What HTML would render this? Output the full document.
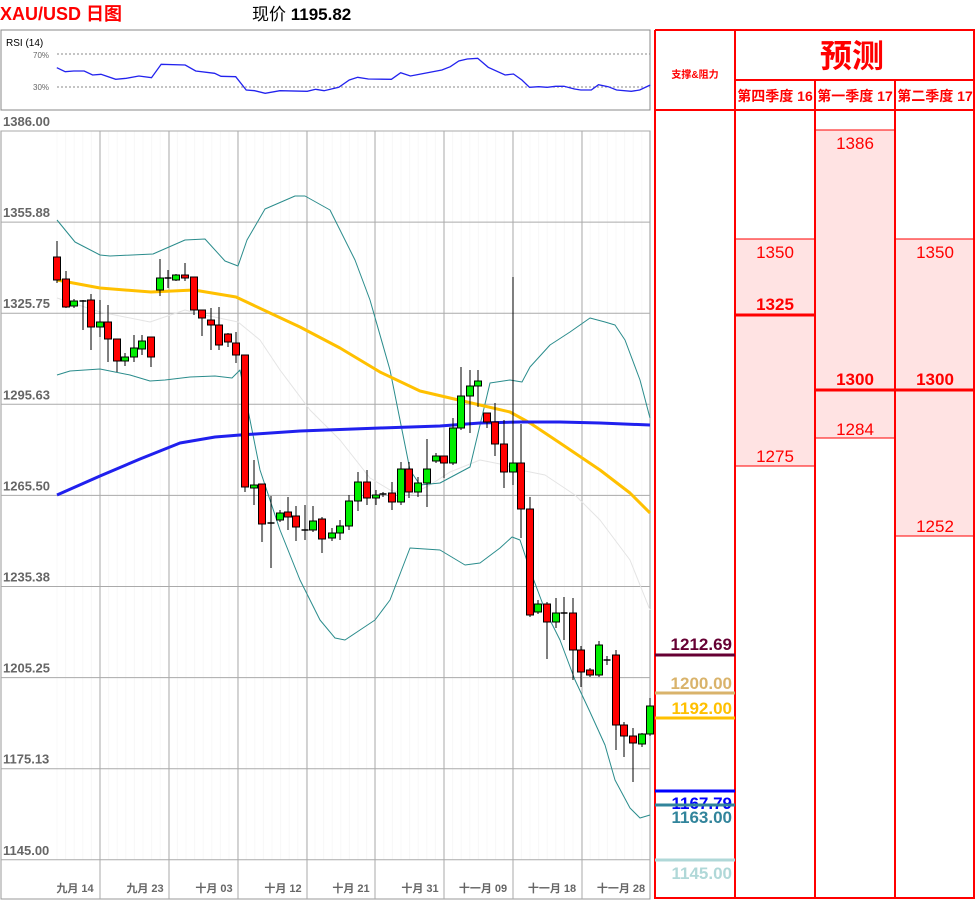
<!DOCTYPE html>
<html><head><meta charset="utf-8"><style>
html,body{margin:0;padding:0;background:#fff;width:975px;height:900px;overflow:hidden}
svg text{font-family:"Liberation Sans","Noto Sans CJK SC",sans-serif}
</style></head><body>
<svg id="s" width="975" height="900" xmlns="http://www.w3.org/2000/svg">
<text x="0" y="20" font-size="18" font-weight="bold" fill="#ff0000">XAU/USD 日图</text>
<text x="252" y="20" font-size="17" fill="#000">现价 <tspan font-weight="bold">1195.82</tspan></text>
<rect x="1" y="30" width="649" height="80" fill="#fff" stroke="#888" stroke-width="1"/>
<text x="6" y="46" font-size="10" fill="#000">RSI (14)</text>
<line x1="57" y1="54" x2="650" y2="54" stroke="#888" stroke-dasharray="2,2"/>
<line x1="57" y1="87" x2="650" y2="87" stroke="#888" stroke-dasharray="2,2"/>
<text x="33" y="58" font-size="8" fill="#666">70%</text>
<text x="33" y="90" font-size="8" fill="#666">30%</text>
<g id="chart"></g>
<g id="tbl"></g>
</svg>
<script>
var S=document.getElementById('s'),NS='http://www.w3.org/2000/svg';
function el(t,a,p){var e=document.createElementNS(NS,t);for(var k in a)e.setAttribute(k,a[k]);(p||S).appendChild(e);return e}
function tx(x,y,s,a,p){var e=el('text',a,p);e.setAttribute('x',x);e.setAttribute('y',y);e.textContent=s;return e}
var r=[[135,203],[155,215],[175,213],[200,213],[220,225],[240,223],[275,238],[300,235],[330,228],[360,233],[383,193],[440,195],[465,213],[510,220],[525,229],[560,230],[585,270],[605,272],[630,280],[665,272],[730,274],[750,268],[770,272],[805,262],[830,240],[850,232],[875,237],[930,238],[952,218],[975,228],[1000,222],[1050,210],[1070,200],[1090,183],[1110,177],[1135,175],[1160,202],[1200,225],[1220,222],[1240,240],[1258,262],[1280,260],[1300,262],[1320,259],[1340,259],[1365,267],[1380,270],[1405,270],[1422,254],[1445,260],[1465,270],[1500,274],[1520,270],[1545,255]];
el('polyline',{points:r.map(function(p){return (p[0]/2.376).toFixed(1)+','+(p[1]/3).toFixed(1)}).join(' '),fill:'none',stroke:'#2222ee','stroke-width':1.3});
el('rect',{x:1,y:131,width:649,height:768,fill:'#fff',stroke:'#999','stroke-width':1});
for(var x=57;x<650;x+=8.6)el('line',{x1:x,y1:131,x2:x,y2:860,stroke:'#f8f8f8'});
var vx=[100,169,238,307,375,444,513,582];
vx.forEach(function(x){el('line',{x1:x,y1:131,x2:x,y2:899,stroke:'#aaa'})});
var labs=['1386.00','1355.88','1325.75','1295.63','1265.50','1235.38','1205.25','1175.13','1145.00'];
for(var i=0;i<9;i++){var y=131+i*91.1;el('line',{x1:1,y1:y,x2:650,y2:y,stroke:'#aaa'});tx(3,y-5,labs[i],{'font-size':13,fill:'#666','font-weight':'bold'});}
var xl=['九月 14','九月 23','十月 03','十月 12','十月 21','十月 31','十一月 09','十一月 18','十一月 28'];
var xc=[75,145,214,283,351,420,483,552,621];
xl.forEach(function(s,i){tx(xc[i],892,s,{'font-size':11,fill:'#666','font-weight':'bold','text-anchor':'middle'})});
function pl(pts,c,w){el('polyline',{points:pts.map(function(p){return p.join(',')}).join(' '),fill:'none',stroke:c,'stroke-width':w,'stroke-linejoin':'round'})}
pl([[57,298],[100,312],[150,322],[185,310],[200,314],[238,322],[260,340],[280,370],[310,410],[340,440],[370,478],[390,490],[410,495],[430,485],[450,472],[480,460],[505,465],[520,470],[545,475],[575,495],[600,520],[630,560],[650,610]],'#e4e4e4',1);
pl([[57,220],[75,242],[100,255],[110,256],[153,254],[185,240],[205,239],[225,261],[238,266],[247,240],[265,209],[295,196],[305,196],[330,210],[355,260],[370,300],[390,370],[410,470],[420,485],[440,483],[470,467],[490,383],[510,380],[522,382],[530,367],[550,345],[570,332],[590,318],[605,322],[615,325],[625,340],[640,380],[650,418]],'#2a8c8c',1);
pl([[57,375],[70,371],[100,369],[130,375],[150,381],[165,380],[190,377],[215,376],[232,378],[240,370],[250,420],[260,470],[280,530],[300,580],[320,620],[335,638],[345,640],[360,630],[375,620],[390,600],[410,548],[440,550],[465,565],[480,563],[500,548],[512,537],[520,540],[530,570],[545,610],[560,640],[575,680],[590,712],[605,745],[615,780],[630,808],[640,818],[650,815]],'#2a8c8c',1);
pl([[57,280],[100,288],[151,292],[194,290],[236,297],[270,313],[300,327],[340,348],[380,372],[420,391],[450,398],[480,405],[510,412],[530,423],[560,443],[600,470],[630,493],[650,513]],'#ffc000',3);
pl([[57,495],[100,476],[140,459],[180,443],[215,437],[240,435],[300,431],[380,428],[440,426],[480,423],[520,422],[560,422],[600,423],[650,425]],'#2020ee',3);
var C=[[57,257,280,'r',241,283],[66,279,307,'r',271,308],[74,301,306,'g',299,308],[83,301,302,'d',300,330],[91,300,327,'r',294,350],[100,322,327,'g',300,337],[108,322,339,'r',305,362],[117,339,361,'r',339,372],[125,357,361,'g',353,366],[134,348,357,'g',335,362],[142,341,349,'g',335,355],[151,337,357,'r',337,367],
[160,278,290,'g',259,296],[168,278,279,'d',270,288],[176,275,280,'g',274,281],[185,275,278,'r',263,281],[194,277,310,'r',277,315],[202,310,318,'r',310,336],[211,320,325,'r',308,350],[219,325,345,'r',307,350],[228,334,342,'r',333,347],[236,343,355,'r',332,363],[245,355,487,'r',355,492],[254,485,488,'g',460,505],[262,484,524,'r',484,542],[271,523,524,'d',496,568],[280,513,520,'g',510,522],[288,512,517,'r',497,530],[296,516,527,'r',506,541],[305,530,531,'d',505,540],[313,521,530,'g',506,532],[322,519,539,'r',517,553],
[332,533,538,'g',528,541],[340,526,533,'g',520,540],[349,501,526,'g',495,530],[358,482,501,'g',472,511],[367,482,498,'r',470,505],[376,495,498,'g',490,505],[383,494,495,'d',492,497],[392,493,502,'r',482,510],[401,469,502,'g',462,505],[409,469,492,'r',462,498],[418,483,492,'g',477,497],[427,469,483,'g',439,507],[436,456,461,'g',453,463],[444,456,463,'r',456,478],[453,428,463,'g',418,465],[461,396,428,'g',367,430],[470,386,396,'g',370,433],[478,381,386,'g',370,407],[487,413,422,'r',413,428],[495,422,444,'r',403,456],[504,444,472,'r',420,488],[513,463,472,'g',277,485],[521,463,509,'r',424,538],[530,509,615,'r',497,617],[538,604,612,'g',600,614],[547,604,622,'r',602,659],[556,613,622,'g',598,628],[564,613,614,'d',597,640],[573,613,650,'r',598,680],[581,650,672,'r',646,687],[590,670,675,'r',668,677],[599,645,675,'g',641,677],[607,660,661,'d',656,665],[616,655,725,'r',650,750],[624,725,736,'r',722,757],[633,736,743,'r',728,782],[642,734,744,'g',733,747],[650,706,734,'g',698,736]];
C.forEach(function(c){el('line',{x1:c[0],y1:c[4],x2:c[0],y2:c[5],stroke:'#000','stroke-width':1});
var h=Math.max(c[2]-c[1],1);if(c[3]=='d'){el('line',{x1:c[0]-3.5,y1:c[1],x2:c[0]+3.5,y2:c[1],stroke:'#000','stroke-width':1.5});}
else el('rect',{x:c[0]-3.5,y:c[1],width:7,height:h,fill:c[3]=='r'?'#ff0000':'#00ee00',stroke:'#000','stroke-width':1});});
var red='#ff0000',pink='#ffe3e3';
el('rect',{x:735,y:239,width:80,height:227,fill:pink});
el('rect',{x:815,y:130,width:80,height:308,fill:pink});
el('rect',{x:895,y:239,width:80,height:297,fill:pink});
function ln(x1,y1,x2,y2,w,c){el('line',{x1:x1,y1:y1,x2:x2,y2:y2,stroke:c||red,'stroke-width':w||1})}
ln(655,30,975,30,2);ln(735,80,975,80,2);ln(655,110,975,110,2);ln(655,30,655,899,2);ln(735,30,735,899,2);ln(815,80,815,899,2);ln(895,80,895,899,2);ln(974,30,974,899,2);ln(655,898,975,898,2);
ln(735,239,815,239);ln(735,466,815,466);ln(815,130,895,130);ln(815,438,895,438);ln(895,239,975,239);ln(895,536,975,536);
ln(735,315,815,315,3);ln(815,390,975,390,3);
tx(695,78,'支撑&阻力',{'font-size':10,fill:red,'font-weight':'bold','text-anchor':'middle'});
tx(852,67,'预测',{'font-size':32,fill:red,'font-family':'"Noto Serif CJK SC",serif','font-weight':'bold','text-anchor':'middle'});
['第四季度 16','第一季度 17','第二季度 17'].forEach(function(s,i){tx(775+80*i,101,s,{'font-size':14,fill:red,'font-weight':'bold','text-anchor':'middle','font-family':'"Liberation Serif","Noto Serif CJK SC",serif'})});
function nt(x,y,s,b){tx(x,y,s,{'font-size':17,fill:red,'font-weight':b?'bold':'normal','text-anchor':'middle'})}
nt(775,258,'1350');nt(775,310,'1325',1);nt(775,462,'1275');nt(855,149,'1386');nt(855,385,'1300',1);nt(855,435,'1284');nt(935,258,'1350');nt(935,385,'1300',1);nt(935,532,'1252');
var S2=[[655,'#660033','1212.69',650],[693,'#d9b36b','1200.00',689],[718,'#ffc000','1192.00',714],[791,'#0000ff','1167.79',809],[805,'#31849b','1163.00',823],[860,'#b0d8d8','1145.00',879]];
S2.forEach(function(s){ln(655,s[0],735,s[0],3,s[1]);tx(732,s[3],s[2],{'font-size':17,fill:s[1],'font-weight':'bold','text-anchor':'end'})});
</script>
</body></html>
